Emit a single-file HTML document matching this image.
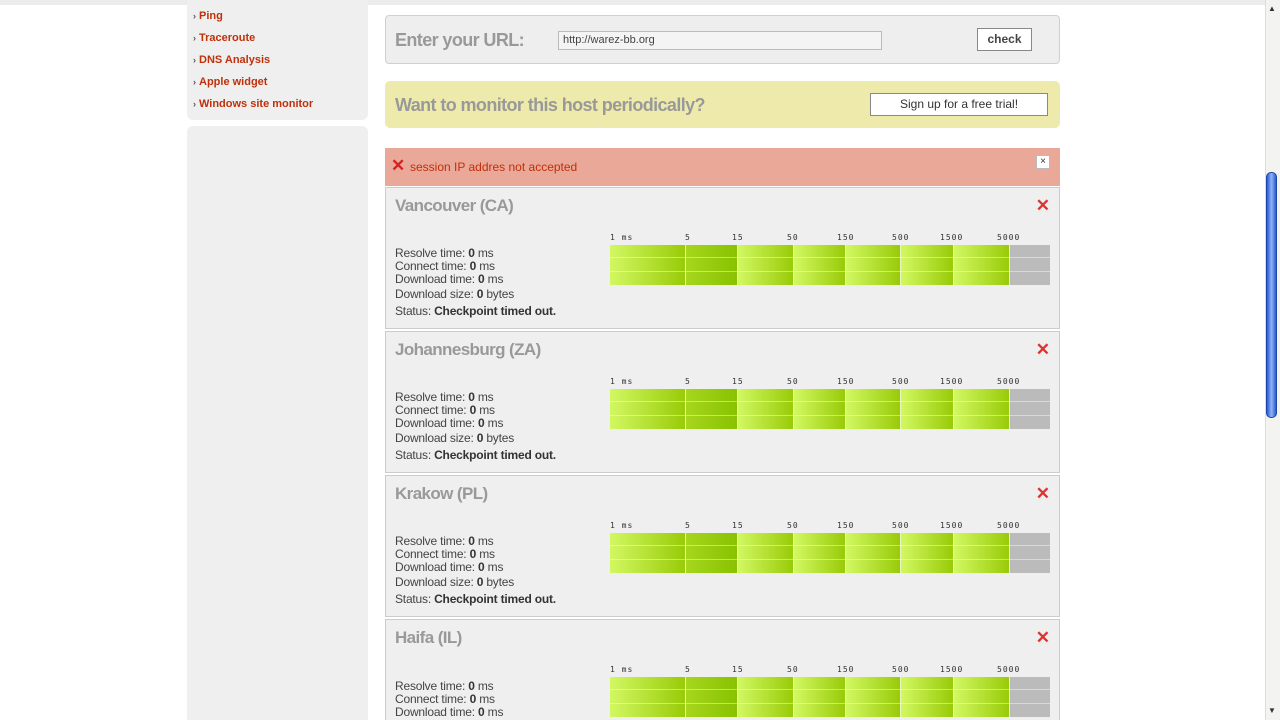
<!DOCTYPE html>
<html><head><style>
html,body{margin:0;width:1280px;height:720px;overflow:hidden}
body{background:#fff;font-family:"Liberation Sans",sans-serif;position:relative}
#w{position:absolute;left:0;top:0;width:1280px;height:720px;overflow:hidden}
.a{position:absolute}
.top{left:0;top:0;width:1265px;height:5px;background:#ececec}
.side{left:187px;top:0;width:181px;height:120px;background:#efefef;border-radius:0 0 6px 6px}
.side2{left:187px;top:126px;width:181px;height:594px;background:#efefef;border-radius:6px 6px 0 0}
.nav{left:193px;font-size:11px;font-weight:bold;color:#c0300a}
.nav b{color:#555;font-size:9px;margin-right:3px}
.box{left:385px;width:673px;border:1px solid #d0d0d0;background:#eee;border-radius:4px}
.card{left:385px;width:673px;height:140px;border:1px solid #ccc;background:#efefef}
.card h2{position:absolute;left:9px;top:8px;margin:0;font-size:17px;color:#999;letter-spacing:-0.6px}
.x{position:absolute;right:9px;top:10px;color:#e03030;font-size:17px;font-weight:bold;line-height:16px}
.info{position:absolute;left:9px;top:59px;font-size:12px;color:#444;line-height:13px;letter-spacing:-0.2px}
.info b{color:#333}
.bar{position:absolute;left:224px;top:57px;width:440px;height:40px}
.seg{position:absolute;top:0;height:40px;background:linear-gradient(to right,#d2f862,#98cb08);border-right:1px solid #e8f5c0}
.seg.d{background:linear-gradient(to right,#a6d61e,#88c200)}
.gray{position:absolute;left:400px;top:0;width:40px;height:40px;background:#bbb}
.rl{position:absolute;left:0;width:440px;height:1px;background:rgba(255,255,255,.45)}
.lab{position:absolute;top:45px;font-family:"DejaVu Sans Mono",monospace;font-size:8px;color:#333;letter-spacing:1px}
</style></head><body><div id="w">
<div class="a top"></div>
<div class="a side"></div><div class="a side2"></div>
<div class="a nav" style="top:10px"><b>›</b>Ping</div>
<div class="a nav" style="top:32px"><b>›</b>Traceroute</div>
<div class="a nav" style="top:54px"><b>›</b>DNS Analysis</div>
<div class="a nav" style="top:76px"><b>›</b>Apple widget</div>
<div class="a nav" style="top:98px"><b>›</b>Windows site monitor</div>

<div class="a box" style="top:15px;height:47px">
<div class="a" style="left:9px;top:14px;font-size:18px;font-weight:bold;color:#999;letter-spacing:-0.6px">Enter your URL:</div>
<div class="a" style="left:172px;top:15px;width:318px;height:17px;border:1px solid #bbb;background:#f4f4f4;font-size:11px;color:#444;line-height:17px;padding-left:4px">http://warez-bb.org</div>
<div class="a" style="left:591px;top:12px;width:53px;height:21px;border:1px solid #888;background:#fff;font-size:12px;font-weight:bold;color:#444;text-align:center;line-height:21px">check</div>
</div>
<div class="a" style="left:385px;top:81px;width:675px;height:47px;background:#eeeaab;border-radius:5px">
<div class="a" style="left:10px;top:14px;font-size:18px;font-weight:bold;color:#999;letter-spacing:-0.6px">Want to monitor this host periodically?</div>
<div class="a" style="left:485px;top:12px;width:176px;height:21px;border:1px solid #888;background:#fff;font-size:12px;color:#333;text-align:center;line-height:21px">Sign up for a free trial!</div>
</div>
<div class="a" style="left:385px;top:148px;width:675px;height:38px;background:#eaa898">
<div class="a" style="left:6px;top:8px;color:#d82020;font-size:17px;font-weight:bold">✕</div>
<div class="a" style="left:25px;top:12px;font-size:12px;color:#c0300a">session IP addres not accepted</div>
<div class="a" style="left:651px;top:7px;width:12px;height:12px;background:#fff;border:1px solid #bbb;font-size:10px;text-align:center;line-height:12px;color:#333">×</div>
</div>

<div class="a card" style="top:187px"><h2>Vancouver (CA)</h2><div class="x">✕</div>
<div class="lab" style="left:224px">1 ms</div><div class="lab" style="left:299px">5</div><div class="lab" style="left:346px">15</div><div class="lab" style="left:401px">50</div><div class="lab" style="left:451px">150</div><div class="lab" style="left:506px">500</div><div class="lab" style="left:554px">1500</div><div class="lab" style="left:611px">5000</div>
<div class="bar"><div class="seg" style="left:0;width:75px"></div><div class="seg d" style="left:76px;width:51px"></div><div class="seg" style="left:128px;width:55px"></div><div class="seg" style="left:184px;width:51px"></div><div class="seg" style="left:236px;width:54px"></div><div class="seg" style="left:291px;width:52px"></div><div class="seg" style="left:344px;width:55px"></div><div class="gray"></div><div class="rl" style="top:12px"></div><div class="rl" style="top:26px"></div></div>
<div class="info">Resolve time: <b>0</b> ms<br>Connect time: <b>0</b> ms<br>Download time: <b>0</b> ms<br><div style="margin-top:2px">Download size: <b>0</b> bytes</div><div style="margin-top:4px">Status: <b>Checkpoint timed out.</b></div></div></div>

<div class="a card" style="top:331px"><h2>Johannesburg (ZA)</h2><div class="x">✕</div>
<div class="lab" style="left:224px">1 ms</div><div class="lab" style="left:299px">5</div><div class="lab" style="left:346px">15</div><div class="lab" style="left:401px">50</div><div class="lab" style="left:451px">150</div><div class="lab" style="left:506px">500</div><div class="lab" style="left:554px">1500</div><div class="lab" style="left:611px">5000</div>
<div class="bar"><div class="seg" style="left:0;width:75px"></div><div class="seg d" style="left:76px;width:51px"></div><div class="seg" style="left:128px;width:55px"></div><div class="seg" style="left:184px;width:51px"></div><div class="seg" style="left:236px;width:54px"></div><div class="seg" style="left:291px;width:52px"></div><div class="seg" style="left:344px;width:55px"></div><div class="gray"></div><div class="rl" style="top:12px"></div><div class="rl" style="top:26px"></div></div>
<div class="info">Resolve time: <b>0</b> ms<br>Connect time: <b>0</b> ms<br>Download time: <b>0</b> ms<br><div style="margin-top:2px">Download size: <b>0</b> bytes</div><div style="margin-top:4px">Status: <b>Checkpoint timed out.</b></div></div></div>

<div class="a card" style="top:475px"><h2>Krakow (PL)</h2><div class="x">✕</div>
<div class="lab" style="left:224px">1 ms</div><div class="lab" style="left:299px">5</div><div class="lab" style="left:346px">15</div><div class="lab" style="left:401px">50</div><div class="lab" style="left:451px">150</div><div class="lab" style="left:506px">500</div><div class="lab" style="left:554px">1500</div><div class="lab" style="left:611px">5000</div>
<div class="bar"><div class="seg" style="left:0;width:75px"></div><div class="seg d" style="left:76px;width:51px"></div><div class="seg" style="left:128px;width:55px"></div><div class="seg" style="left:184px;width:51px"></div><div class="seg" style="left:236px;width:54px"></div><div class="seg" style="left:291px;width:52px"></div><div class="seg" style="left:344px;width:55px"></div><div class="gray"></div><div class="rl" style="top:12px"></div><div class="rl" style="top:26px"></div></div>
<div class="info">Resolve time: <b>0</b> ms<br>Connect time: <b>0</b> ms<br>Download time: <b>0</b> ms<br><div style="margin-top:2px">Download size: <b>0</b> bytes</div><div style="margin-top:4px">Status: <b>Checkpoint timed out.</b></div></div></div>

<div class="a card" style="top:619px;height:101px;border-bottom:none"><h2>Haifa (IL)</h2><div class="x">✕</div>
<div class="lab" style="left:224px">1 ms</div><div class="lab" style="left:299px">5</div><div class="lab" style="left:346px">15</div><div class="lab" style="left:401px">50</div><div class="lab" style="left:451px">150</div><div class="lab" style="left:506px">500</div><div class="lab" style="left:554px">1500</div><div class="lab" style="left:611px">5000</div>
<div class="bar"><div class="seg" style="left:0;width:75px"></div><div class="seg d" style="left:76px;width:51px"></div><div class="seg" style="left:128px;width:55px"></div><div class="seg" style="left:184px;width:51px"></div><div class="seg" style="left:236px;width:54px"></div><div class="seg" style="left:291px;width:52px"></div><div class="seg" style="left:344px;width:55px"></div><div class="gray"></div><div class="rl" style="top:12px"></div><div class="rl" style="top:26px"></div></div>
<div class="info" style="top:60px">Resolve time: <b>0</b> ms<br>Connect time: <b>0</b> ms<br>Download time: <b>0</b> ms</div></div>

<div class="a" style="left:1265px;top:0;width:15px;height:720px;background:#f3f3f0;border-left:1px solid #ddd;box-sizing:border-box"></div>
<div class="a" style="left:1268px;top:4px;font-size:8px;color:#333">▲</div>
<div class="a" style="left:1268px;top:706px;font-size:8px;color:#333">▼</div>
<div class="a" style="left:1266px;top:172px;width:11px;height:246px;background:linear-gradient(to right,#2a5bd0,#8fb4f6 50%,#2a5bd0);border-radius:5px;border:1px solid #1d44a8;box-sizing:border-box"></div>
</div></body></html>
